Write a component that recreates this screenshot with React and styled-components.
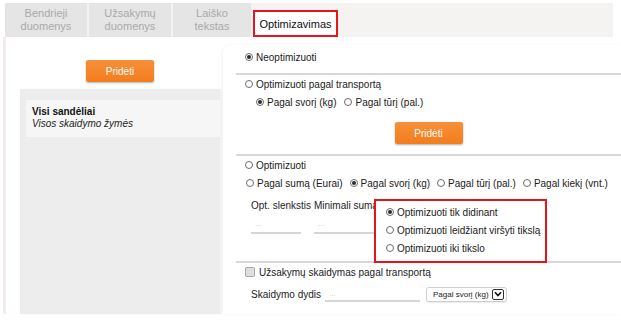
import React from "react";
import styled, { createGlobalStyle } from "styled-components";

const GlobalStyle = createGlobalStyle`
  html, body {
    margin: 0;
    padding: 0;
    background: #fff;
  }
  body {
    font-family: "Liberation Sans", Arial, sans-serif;
    font-size: 10px;
    color: #222;
  }
`;

const tabs = [
  { label: "Bendrieji\nduomenys", width: 82 },
  { label: "Užsakymų\nduomenys", width: 82 },
  { label: "Laiško\ntekstas", width: 78 },
];

function Radio({ checked }) {
  return <RadioDot checked={checked} />;
}

function Option({ checked, children }) {
  return (
    <OptionItem>
      <Radio checked={checked} />
      <span>{children}</span>
    </OptionItem>
  );
}

function App() {
  return (
    <Page>
      <GlobalStyle />
      <TabBar>
        {tabs.map((tab) => (
          <Tab key={tab.label} width={tab.width}>
            {tab.label}
          </Tab>
        ))}
        <ActiveTab>Optimizavimas</ActiveTab>
      </TabBar>

      <Body>
        <LeftCol>
          <ButtonRow>
            <OrangeButton>Pridėti</OrangeButton>
          </ButtonRow>
          <Panel>
            <Card>
              <CardTitle>Visi sandėliai</CardTitle>
              <CardSub>Visos skaidymo žymės</CardSub>
            </Card>
          </Panel>
        </LeftCol>

        <RightCol>
          <Section>
            <Row indent={9}>
              <Option checked>Neoptimizuoti</Option>
            </Row>
          </Section>
          <Separator />

          <Section>
            <Row indent={9}>
              <Option>Optimizuoti pagal transportą</Option>
            </Row>
            <Row indent={20}>
              <Option checked>Pagal svorį (kg)</Option>
              <Option>Pagal tūrį (pal.)</Option>
            </Row>
            <ButtonRow top={11}>
              <OrangeButton>Pridėti</OrangeButton>
            </ButtonRow>
          </Section>
          <Separator top={10} />

          <Section relative>
            <Row indent={9}>
              <Option>Optimizuoti</Option>
            </Row>
            <Row indent={10} gap={7}>
              <Option>Pagal sumą (Eurai)</Option>
              <Option checked>Pagal svorį (kg)</Option>
              <Option>Pagal tūrį (pal.)</Option>
              <Option>Pagal kiekį (vnt.)</Option>
            </Row>
            <Fields>
              <Field width={63}>
                <FieldLabel>Opt. slenkstis</FieldLabel>
                <Underline width={50}>...</Underline>
              </Field>
              <Field>
                <FieldLabel>Minimali suma</FieldLabel>
                <Underline width={60}>...</Underline>
              </Field>
            </Fields>
            <Popup>
              <PopupRow>
                <Option checked>Optimizuoti tik didinant</Option>
              </PopupRow>
              <PopupRow>
                <Option>Optimizuoti leidžiant viršyti tikslą</Option>
              </PopupRow>
              <PopupRow>
                <Option>Optimizuoti iki tikslo</Option>
              </PopupRow>
            </Popup>
          </Section>
          <Separator top={27} />

          <Section>
            <Row indent={9}>
              <OptionItem>
                <CheckBox />
                <span>Užsakymų skaidymas pagal transportą</span>
              </OptionItem>
            </Row>
            <Row indent={15} top={4} gap={4}>
              <SizeLabel>Skaidymo dydis</SizeLabel>
              <Underline width={95} inline>...</Underline>
              <SelectBox>
                <span>Pagal svorį (kg)</span>
                <SelectArrow>
                  <svg width="8" height="6" viewBox="0 0 8 6">
                    <path d="M1 1.2 L4 4.5 L7 1.2" fill="none" stroke="#111" strokeWidth="1.6" />
                  </svg>
                </SelectArrow>
              </SelectBox>
            </Row>
          </Section>
        </RightCol>
      </Body>
    </Page>
  );
}

const Page = styled.div`
  width: 621px;
  height: 320px;
  box-sizing: border-box;
  padding: 3px 0 0 3px;
  overflow: hidden;
  background: #fff;
`;

const TabBar = styled.div`
  display: flex;
  align-items: flex-end;
  gap: 2px;
  height: 34px;
  margin: 0 8px 0 2px;
  background: #f4f3f2;
`;

const Tab = styled.div`
  width: ${(p) => p.width}px;
  height: 100%;
  display: flex;
  align-items: center;
  justify-content: center;
  text-align: center;
  white-space: pre;
  background: #e5e5e5;
  color: #a9a9a9;
  font-size: 11px;
  line-height: 13px;
`;

const ActiveTab = styled.div`
  width: 85px;
  height: 27px;
  box-sizing: border-box;
  display: flex;
  align-items: center;
  justify-content: center;
  background: #fff;
  border: 2px solid #e8161b;
  color: #111;
  font-size: 11px;
`;

const Body = styled.div`
  display: flex;
  height: 277px;
`;

const LeftCol = styled.div`
  width: 217px;
  flex-shrink: 0;
  box-sizing: border-box;
  border-left: 3px solid #f5ecec;
  padding-left: 14px;
  display: flex;
  flex-direction: column;
`;

const ButtonRow = styled.div`
  display: flex;
  justify-content: center;
  margin-top: ${(p) => (p.top !== undefined ? p.top : 23)}px;
`;

const OrangeButton = styled.button`
  width: 68px;
  height: 22px;
  border: none;
  border-radius: 2px;
  background: linear-gradient(#f7903a, #f27d1c);
  box-shadow: 0 1px 2px rgba(0, 0, 0, 0.3);
  color: #fff;
  font-family: inherit;
  font-size: 10px;
  padding: 0;
`;

const Panel = styled.div`
  flex: 1;
  margin-top: 7px;
  background: #ededed;
  padding: 11px 0 0 6px;
  box-shadow: 2px 0 2px rgba(0, 0, 0, 0.05);
`;

const Card = styled.div`
  background: #f6f6f6;
  padding: 6px 6px 7px;
  line-height: 12px;
`;

const CardTitle = styled.div`
  font-weight: bold;
  color: #111;
`;

const CardSub = styled.div`
  font-style: italic;
  color: #222;
`;

const RightCol = styled.div`
  flex: 1;
  margin: 8px 0 0 3px;
  padding: 3px 0 0 13px;
  border-top-left-radius: 8px;
  box-shadow: -1px 0 3px rgba(0, 0, 0, 0.05);
  display: flex;
  flex-direction: column;
`;

const Section = styled.div`
  position: ${(p) => (p.relative ? "relative" : "static")};
  display: flex;
  flex-direction: column;
`;

const Row = styled.div`
  display: flex;
  align-items: center;
  height: 18px;
  padding-left: ${(p) => p.indent || 0}px;
  gap: ${(p) => p.gap || 8}px;
  margin-top: ${(p) => p.top || 0}px;
  white-space: nowrap;
`;

const OptionItem = styled.label`
  display: flex;
  align-items: center;
  gap: 3px;
  color: #1a1a1a;
`;

const RadioDot = styled.span`
  width: 8px;
  height: 8px;
  box-sizing: border-box;
  border: 1px solid #6b6b6b;
  border-radius: 50%;
  background: #fff;
  display: inline-flex;
  align-items: center;
  justify-content: center;
  flex-shrink: 0;

  &::after {
    content: "";
    width: 4px;
    height: 4px;
    border-radius: 50%;
    background: ${(p) => (p.checked ? "#2b2b2b" : "transparent")};
  }
`;

const CheckBox = styled.span`
  width: 8px;
  height: 8px;
  border: 1px solid #a8a8a8;
  border-radius: 2px;
  background: #dedede;
  margin-right: 1px;
`;

const Separator = styled.div`
  height: 2px;
  background: #d8d8d8;
  margin-top: ${(p) => (p.top !== undefined ? p.top : 7)}px;
`;

const Fields = styled.div`
  display: flex;
  padding-left: 15px;
  margin-top: 5px;
`;

const Field = styled.div`
  display: flex;
  flex-direction: column;
  width: ${(p) => (p.width ? `${p.width}px` : "auto")};
`;

const FieldLabel = styled.div`
  height: 18px;
  line-height: 18px;
  white-space: nowrap;
  color: #222;
`;

const Underline = styled.div`
  width: ${(p) => p.width}px;
  height: ${(p) => (p.inline ? 13 : 18)}px;
  box-sizing: border-box;
  border-bottom: 2px solid #d6d6d6;
  margin-top: ${(p) => (p.inline ? 2 : 1)}px;
  padding-left: 4px;
  color: #c4c4c4;
  font-size: 8px;
  line-height: ${(p) => (p.inline ? 10 : 16)}px;
`;

const Popup = styled.div`
  position: absolute;
  left: 138px;
  top: 43px;
  width: 173px;
  height: 64px;
  box-sizing: border-box;
  border: 2px solid #e3151b;
  background: #fff;
  padding: 2px 0 0 10px;
`;

const PopupRow = styled.div`
  height: 18px;
  display: flex;
  align-items: center;
  white-space: nowrap;
`;

const SizeLabel = styled.span`
  color: #222;
`;

const SelectBox = styled.div`
  display: flex;
  align-items: center;
  gap: 3px;
  height: 15px;
  box-sizing: border-box;
  margin-left: 2px;
  padding: 0 2px 0 6px;
  border: 1px solid #cfcfcf;
  border-radius: 3px;
  background: #fff;
  box-shadow: 0 1px 1px rgba(0, 0, 0, 0.08);
  font-size: 8px;
  color: #222;
`;

const SelectArrow = styled.span`
  width: 12px;
  height: 11px;
  box-sizing: border-box;
  border: 1px solid #333;
  border-radius: 2px;
  display: flex;
  align-items: center;
  justify-content: center;
  background: #fff;
`;

export default App;
